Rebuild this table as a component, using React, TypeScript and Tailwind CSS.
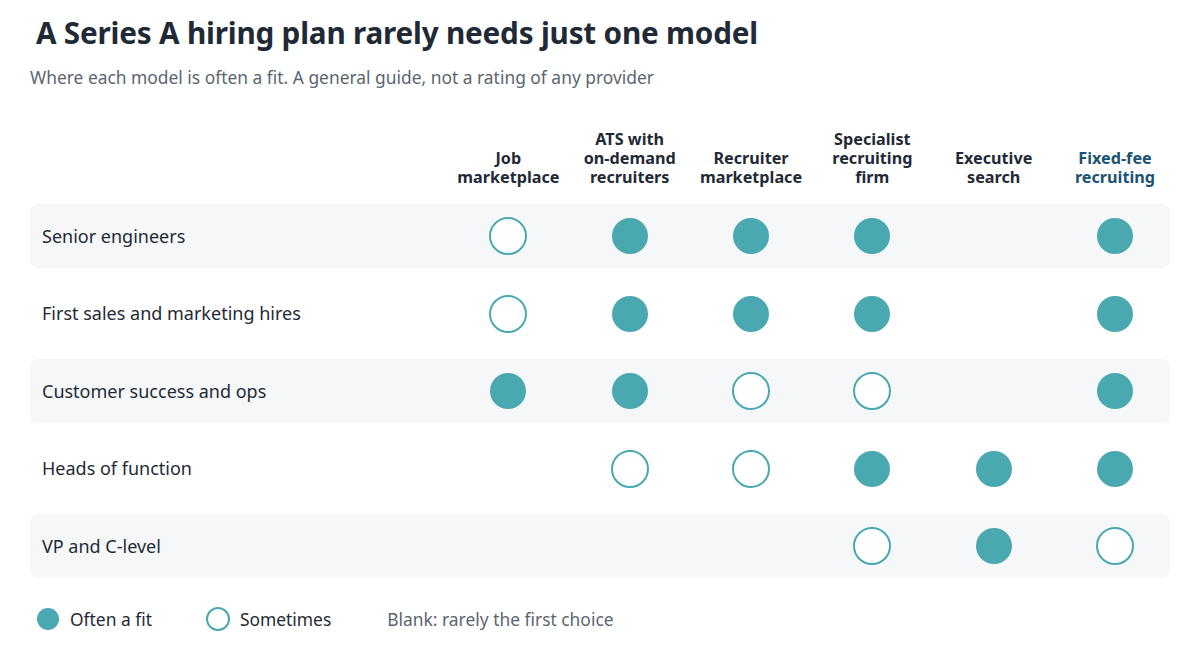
import React from "react";

type Fit = "F" | "S" | "-";

const columns = [
  ["Job", "marketplace"],
  ["ATS with", "on-demand", "recruiters"],
  ["Recruiter", "marketplace"],
  ["Specialist", "recruiting", "firm"],
  ["Executive", "search"],
  ["Fixed-fee", "recruiting"],
];

const rows: { label: string; fits: Fit[] }[] = [
  { label: "Senior engineers", fits: ["S", "F", "F", "F", "-", "F"] },
  { label: "First sales and marketing hires", fits: ["S", "F", "F", "F", "-", "F"] },
  { label: "Customer success and ops", fits: ["F", "F", "S", "S", "-", "F"] },
  { label: "Heads of function", fits: ["-", "S", "S", "F", "F", "F"] },
  { label: "VP and C-level", fits: ["-", "-", "-", "S", "F", "S"] },
];

const gridCols = "grid grid-cols-[1fr_repeat(6,110px)] gap-x-[11.33px]";

const Dot = ({ fit }: { fit: Fit }) => {
  if (fit === "F") return <div className="w-9 h-9 rounded-full bg-[#4aa9b0]" />;
  if (fit === "S")
    return <div className="w-[38px] h-[38px] rounded-full border-[2.5px] border-[#4aa9b0] bg-white" />;
  return null;
};

const App = () => {
  return (
    <div className="w-[1200px] h-[660px] bg-white text-[#1f2a36] font-['Noto_Sans',sans-serif] px-[30px] pt-[13px]">
      <h1 className="pl-1.5 text-[29.7px] font-bold leading-[40px] tracking-[-0.2px]">
        A Series A hiring plan rarely needs just one model
      </h1>
      <p className="mt-[12px] text-[17.4px] leading-6 text-[#5b6570]">
        Where each model is often a fit. A general guide, not a rating of any provider
      </p>

      <div className={`${gridCols} mt-[38px] h-[60px] items-end`}>
        <div />
        {columns.map((lines, i) => (
          <div
            key={i}
            className={`text-center text-[16.2px] font-bold leading-[19px] ${
              i === 5 ? "text-[#1b5372]" : "text-[#1f2a36]"
            }`}
          >
            {lines.map((l) => (
              <div key={l} className="h-[19px]">
                {l}
              </div>
            ))}
          </div>
        ))}
      </div>

      <div className="mt-[17px] flex flex-col gap-[13.5px]">
        {rows.map((row, r) => (
          <div
            key={row.label}
            className={`${gridCols} h-16 items-center rounded-lg pl-3 ${
              r % 2 === 0 ? "bg-[#f5f7f9]" : "bg-white"
            }`}
          >
            <div className="text-[18px]">{row.label}</div>
            {row.fits.map((f, i) => (
              <div key={i} className="flex justify-center">
                <Dot fit={f} />
              </div>
            ))}
          </div>
        ))}
      </div>

      <div className="mt-[28px] flex items-center pl-[7px] text-[17.4px]">
        <div className="w-[22px] h-[22px] rounded-full bg-[#4aa9b0]" />
        <span className="ml-[11px]">Often a fit</span>
        <div className="ml-[54px] w-[24px] h-[24px] rounded-full border-[2.5px] border-[#4aa9b0]" />
        <span className="ml-[10px]">Sometimes</span>
        <span className="ml-[56px] text-[#5b6570]">Blank: rarely the first choice</span>
      </div>
    </div>
  );
};

export default App;
